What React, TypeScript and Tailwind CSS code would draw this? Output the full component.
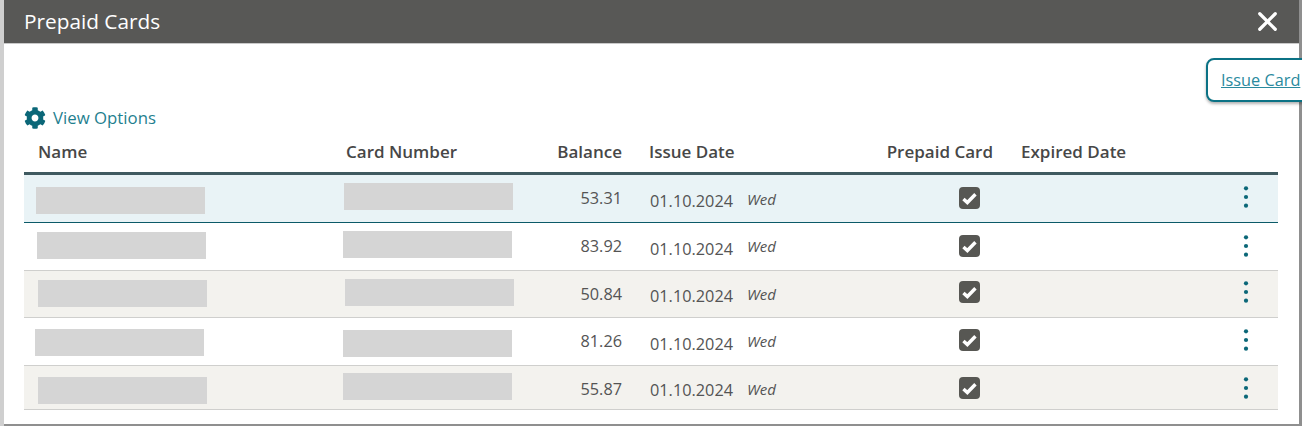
import { X } from 'lucide-react';
import { FaCog } from 'react-icons/fa';

const gridCols = 'grid grid-cols-[308px_200px_90px_258px_127px_203px_68px]';

const rows = [
  { balance: '53.31', rowCls: 'h-[48px] bg-[#e9f3f6] border-b border-[#0b5a68]', nameCls: 'ml-[12px] mt-[12px]', cardCls: 'ml-[12px] mt-[8px]', dateCls: 'mt-[15px]', dayCls: 'mt-[13px]', boxCls: 'mt-[12px]', dotsCls: 'mt-[10px]' },
  { balance: '83.92', rowCls: 'h-[48px] bg-white border-b border-[#cfcfcd]', nameCls: 'ml-[13px] mt-[9px]', cardCls: 'ml-[11px] mt-[8px]', dateCls: 'mt-[15px]', dayCls: 'mt-[12px]', boxCls: 'mt-[12px]', dotsCls: 'mt-[11px]' },
  { balance: '50.84', rowCls: 'h-[47px] bg-[#f3f2ee] border-b border-[#cfcfcd]', nameCls: 'ml-[14px] mt-[9px]', cardCls: 'ml-[13px] mt-[8px]', dateCls: 'mt-[14px]', dayCls: 'mt-[12px]', boxCls: 'mt-[10px]', dotsCls: 'mt-[9px]' },
  { balance: '81.26', rowCls: 'h-[48px] bg-white border-b border-[#cfcfcd]', nameCls: 'ml-[11px] mt-[11px]', cardCls: 'ml-[11px] mt-[12px]', dateCls: 'mt-[15px]', dayCls: 'mt-[12px]', boxCls: 'mt-[11px]', dotsCls: 'mt-[10px]' },
  { balance: '55.87', rowCls: 'h-[44px] bg-[#f3f2ee] border-b border-[#cfcfcd]', nameCls: 'ml-[14px] mt-[11px]', cardCls: 'ml-[11px] mt-[7px]', dateCls: 'mt-[13px]', dayCls: 'mt-[12px]', boxCls: 'mt-[11px]', dotsCls: 'mt-[10px]' },
];

function CheckBox({ className }: { className: string }) {
  return (
    <div className={`w-[21px] h-[22px] rounded-[4px] bg-[#575753] flex items-center justify-center ${className}`}>
      <svg viewBox="0 0 16 16" className="w-[17px] h-[17px]" fill="none" stroke="white" strokeWidth="3.2">
        <path d="M2.3 8.4l3.7 3.4 7.6-7.8" />
      </svg>
    </div>
  );
}

function Dots() {
  return (
    <svg viewBox="0 0 24 24" className="w-[24px] h-[24px]" fill="#0b6778">
      <circle cx="12" cy="3.3" r="2.1" />
      <circle cx="12" cy="12" r="2.1" />
      <circle cx="12" cy="20.7" r="2.1" />
    </svg>
  );
}

export default function App() {
  return (
    <div className="w-[1302px] h-[426px] overflow-hidden bg-[#8f8f8f] border-l-[4px] border-[#cfcfcf] font-['Open_Sans',sans-serif]">
      <div className="w-[1295px] h-[424px] bg-white">
        <div className="h-[44px] bg-[#585856] border-b border-[#c9c9c9] flex items-center justify-between pl-[20px] pr-[16px]">
          <span className="text-white text-[20.8px] mt-[1px]">Prepaid Cards</span>
          <X className="w-[31px] h-[31px] text-white" strokeWidth={2.5} />
        </div>

        <div className="flex justify-end mt-[14px] -mr-[40px]">
          <button className="h-[44px] w-[133px] pl-[13px] text-left border-2 border-[#0b7285] rounded-lg bg-white shadow-[0_2px_3px_rgba(0,0,0,0.3)] text-[#2a8a9e] underline text-[16.3px]">
            Issue Card
          </button>
        </div>

        <div className="ml-[20px] w-[1254px]">
          <div className="flex items-center gap-[7px] mt-[5px] h-[22px] text-[#1f7f8f] text-[16.8px]">
            <FaCog className="w-[22px] h-[22px] text-[#0b6778]" />
            <span>View Options</span>
          </div>

          <div className={`${gridCols} h-[46px] pt-[10px] border-b-[3px] border-[#3f5a60] text-[#474747] text-[17px] font-semibold items-start`}>
            <span className="pl-[14px]">Name</span>
            <span className="pl-[14px]">Card Number</span>
            <span className="text-right">Balance</span>
            <span className="pl-[27px]">Issue Date</span>
            <span className="text-right pr-[14px]">Prepaid Card</span>
            <span className="pl-[14px]">Expired Date</span>
            <span />
          </div>

          {rows.map((row, i) => (
            <div key={i} className={`${gridCols} ${row.rowCls} text-[#545454] text-[16.3px] leading-[22px] items-start`}>
              <div className={`w-[169px] h-[27px] bg-[#d5d5d5] ${row.nameCls}`} />
              <div className={`w-[169px] h-[27px] bg-[#d5d5d5] ${row.cardCls}`} />
              <span className="text-right mt-[12px]">{row.balance}</span>
              <div className="pl-[28px] flex items-start">
                <span className={row.dateCls}>01.10.2024</span>
                <span className={`ml-[14px] text-[15px] italic ${row.dayCls}`}>Wed</span>
              </div>
              <div className="flex justify-end pr-[27px]">
                <CheckBox className={row.boxCls} />
              </div>
              <span />
              <div className={`pl-[24px] ${row.dotsCls}`}>
                <Dots />
              </div>
            </div>
          ))}
        </div>
      </div>
    </div>
  );
}
